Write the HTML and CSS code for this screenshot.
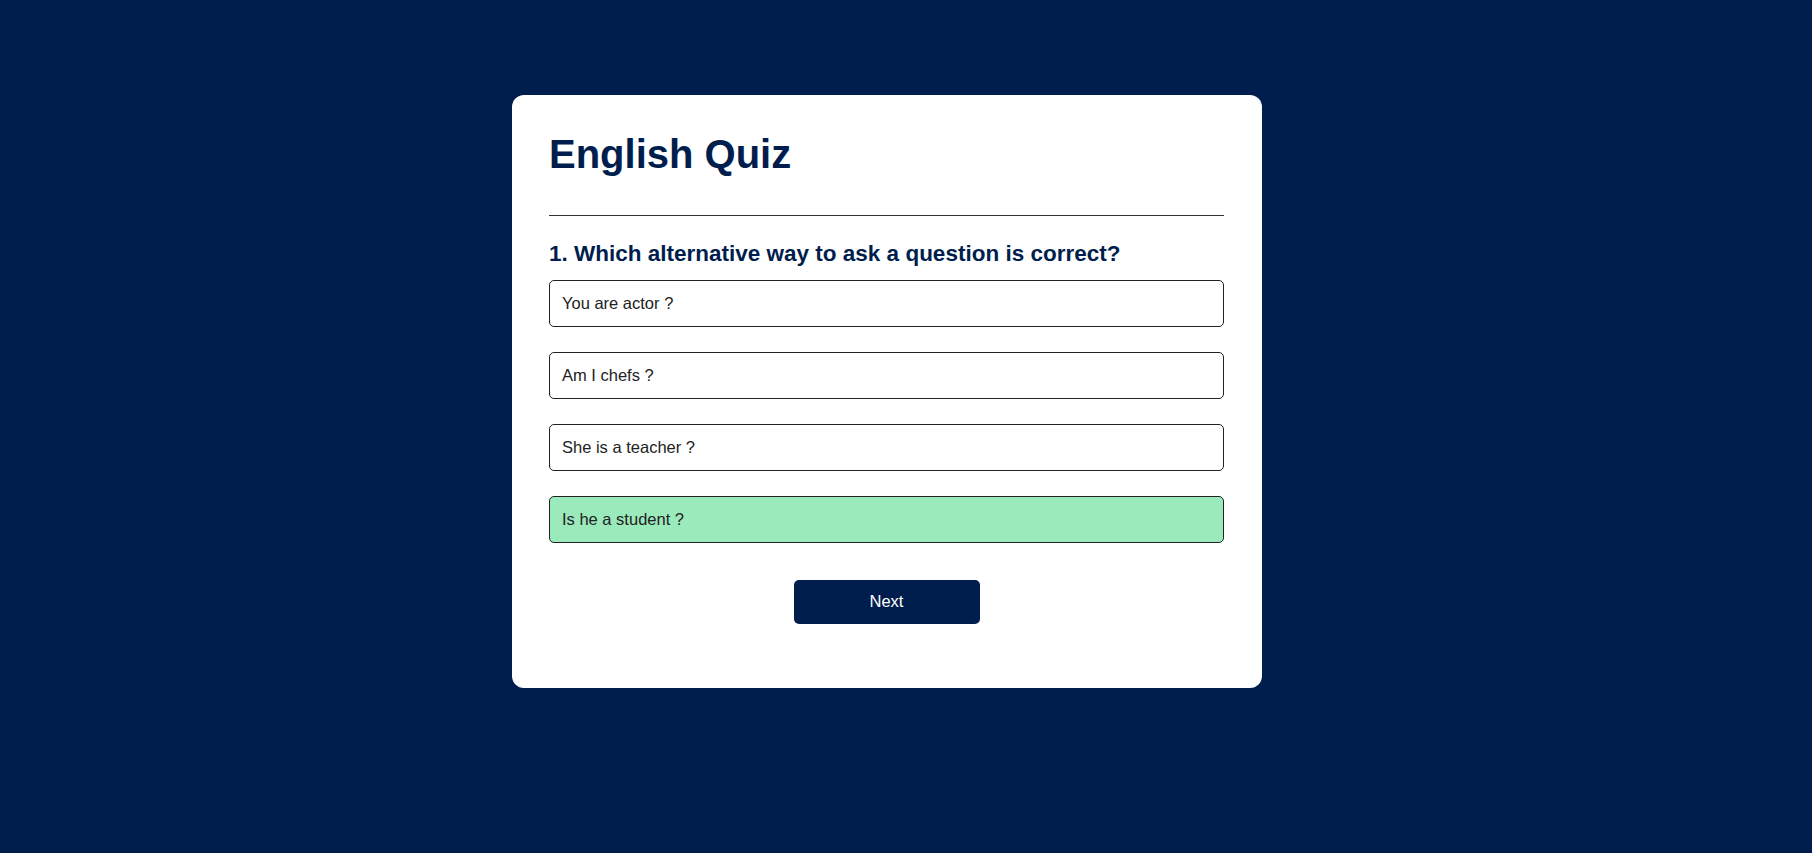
FILE: index.html
```html
<!DOCTYPE html>
<html lang="en">
<head>
<meta charset="utf-8">
<title>English Quiz</title>
<link rel="stylesheet" href="styles.css">
</head>
<body>
<div class="page">
  <div class="app">
    <h1 class="title">English Quiz</h1>
    <div class="quiz">
      <h2 class="question">1. Which alternative way to ask a question is correct?</h2>
      <div class="answers">
        <button class="btn">You are actor ?</button>
        <button class="btn">Am I chefs ?</button>
        <button class="btn">She is a teacher ?</button>
        <button class="btn correct">Is he a student ?</button>
      </div>
      <button class="next-btn">Next</button>
    </div>
  </div>
</div>
</body>
</html>
```

FILE: styles.css
```css
* {
  box-sizing: border-box;
}
html, body {
  margin: 0;
  padding: 0;
}
body {
  background: #001e4d;
  font-family: "Liberation Sans", Arial, sans-serif;
  min-height: 853px;
}
.page {
  padding: 95px 38px 0 0;
}
.app {
  background: #fff;
  width: 750px;
  margin: 0 auto;
  border-radius: 12px;
  padding: 37px 38px 64px 37px;
}
.title {
  margin: 0;
  font-size: 40px;
  font-weight: 700;
  color: #001e4d;
  border-bottom: 1px solid #333;
  padding-bottom: 38px;
}
.question {
  margin: 24.5px 0 1px;
  font-size: 22.5px;
  font-weight: 700;
  color: #001e4d;
}
.answers {
  display: flex;
  flex-direction: column;
}
.btn {
  display: block;
  background: #fff;
  color: #222;
  font-family: "Liberation Sans", Arial, sans-serif;
  font-size: 16.5px;
  line-height: 20px;
  font-weight: 400;
  width: 100%;
  border: 1px solid #222;
  padding: 12px 12px 12.5px;
  margin: 12.5px 0 0;
  text-align: left;
  border-radius: 5px;
}
.btn + .btn {
  margin-top: 25.5px;
}
.btn.correct {
  background: #9aeabc;
}
.next-btn {
  display: block;
  background: #001e4d;
  color: #fff;
  font-family: "Liberation Sans", Arial, sans-serif;
  font-size: 16.5px;
  line-height: 19px;
  width: 186px;
  border: 0;
  padding: 12.5px;
  margin: 37px auto 0;
  border-radius: 5px;
}
```
